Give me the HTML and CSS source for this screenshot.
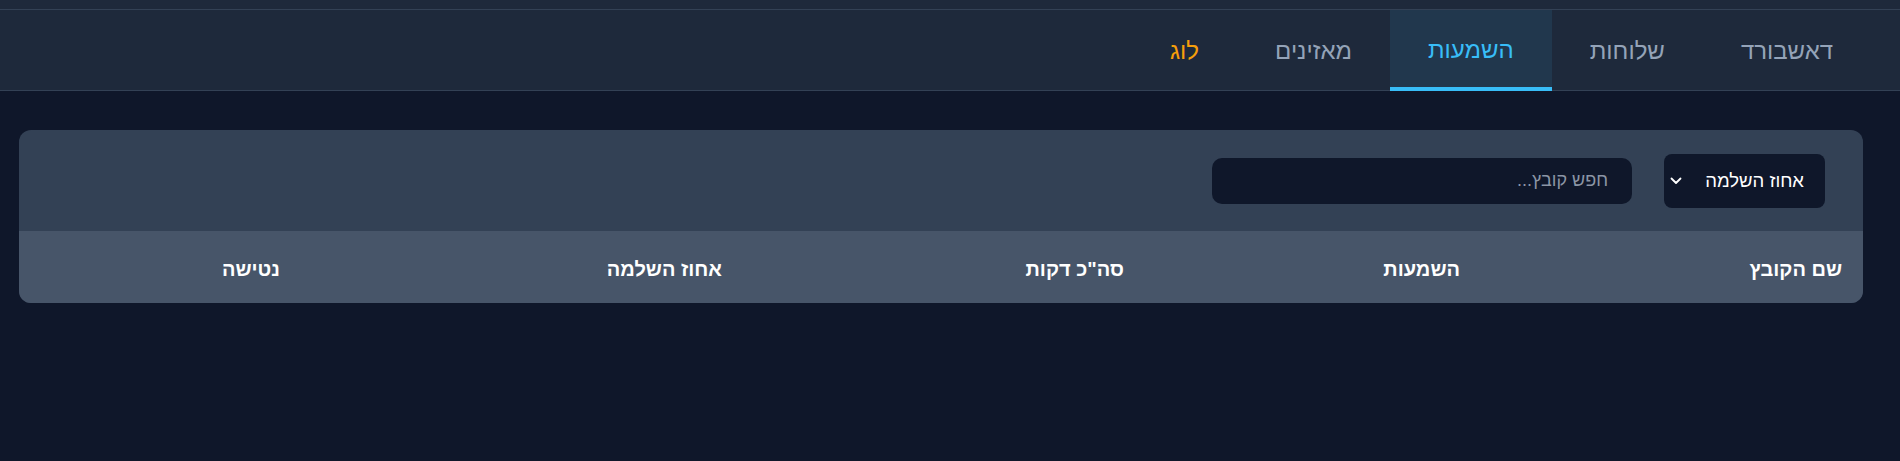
FILE: index.html
```html
<!DOCTYPE html>
<html lang="he" dir="rtl">
<head>
<meta charset="utf-8">
<title>השמעות</title>
<link rel="stylesheet" href="styles.css">
</head>
<body>
<div class="topbar"></div>
<nav class="tabs">
  <a class="tab">דאשבורד</a>
  <a class="tab">שלוחות</a>
  <a class="tab active">השמעות</a>
  <a class="tab">מאזינים</a>
  <a class="tab log">לוג</a>
</nav>
<main class="content">
  <section class="panel">
    <div class="toolbar">
      <div class="select">
        <span class="select-label">אחוז השלמה</span>
        <svg class="chev" width="12" height="8" viewBox="0 0 12 8"><path d="M1.5 1.5 L6 6 L10.5 1.5" fill="none" stroke="#fff" stroke-width="1.8" stroke-linecap="round" stroke-linejoin="round"/></svg>
      </div>
      <div class="search"><span class="placeholder">חפש קובץ...</span></div>
    </div>
    <table class="grid">
      <colgroup>
        <col class="c1"><col class="c2"><col class="c3"><col class="c4"><col class="c5">
      </colgroup>
      <thead>
        <tr>
          <th>שם הקובץ</th>
          <th>השמעות</th>
          <th>סה"כ דקות</th>
          <th>אחוז השלמה</th>
          <th>נטישה</th>
        </tr>
      </thead>
      <tbody></tbody>
    </table>
  </section>
</main>
</body>
</html>
```
FILE: styles.css
```css
* { box-sizing: border-box; }
html, body { margin: 0; padding: 0; }
body {
  background: #0f172a;
  font-family: "Liberation Sans", Arial, sans-serif;
  color: #fff;
  height: 461px;
  overflow: hidden;
}
.topbar {
  height: 10px;
  background: #1e293b;
  border-bottom: 1px solid #334155;
}
.tabs {
  display: flex;
  height: 81px;
  background: #1e293b;
  border-bottom: 1px solid #334155;
  padding-right: 29px;
}
.tab {
  display: flex;
  align-items: center;
  padding: 3px 38px 0;
  font-size: 24px;
  color: #94a3b8;
  border-bottom: 3px solid transparent;
  margin-bottom: -1px;
}
.tab.active {
  color: #38bdf8;
  background: #21374d;
  border-bottom: 4px solid #38bdf8;
}
.tab.log { color: #f59e0b; }
.content {
  padding: 39px 37px 0 19px;
}
.panel {
  background: #334155;
  border-radius: 12px;
  overflow: hidden;
}
.toolbar {
  height: 101px;
  display: flex;
  align-items: center;
  gap: 32px;
  padding-right: 38px;
}
.select {
  width: 161px;
  height: 54px;
  background: #0f172a;
  border-radius: 8px;
  display: flex;
  align-items: center;
  justify-content: space-between;
  padding: 0 21px 0 6px;
  font-size: 18.5px;
  color: #fff;
}
.chev { margin-top: 1px; }
.search {
  width: 420px;
  height: 46px;
  background: #0f172a;
  border-radius: 10px;
  display: flex;
  align-items: center;
  padding: 0 24px;
  font-size: 18px;
}
.placeholder { color: #8b95a5; }
.grid {
  width: 100%;
  border-collapse: collapse;
  table-layout: fixed;
  background: #475569;
}
.c1 { width: 382px; }
.c2 { width: 336px; }
.c3 { width: 402px; }
.c4 { width: 442px; }
.c5 { width: 282px; }
.grid th {
  height: 72px;
  padding: 5px 21px 0;
  text-align: right;
  font-size: 20px;
  font-weight: bold;
  color: #fff;
}
```
